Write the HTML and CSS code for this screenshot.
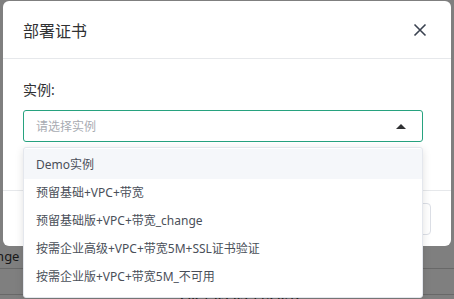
FILE: index.html
```html
<!DOCTYPE html>
<html lang="zh-CN">
<head>
  <meta charset="UTF-8">
  <title>部署证书</title>
  <link rel="stylesheet" href="styles.css">
</head>
<body>
  <div class="page">
    <div class="table-row first">
      <span class="cell">预留基础版+VPC+带宽_change</span>
    </div>
    <div class="table-row">
      <span class="cell date">2021-03-03 11:20:12</span>
    </div>
  </div>

  <div class="mask"></div>

  <div class="dialog">
    <div class="dialog-header">
      <span class="dialog-title">部署证书</span>
      <svg class="close-icon" width="14" height="14" viewBox="0 0 14 14">
        <path d="M1.5 1.5 L12.5 12.5 M12.5 1.5 L1.5 12.5" stroke="#3a4250" stroke-width="1.6" fill="none"/>
      </svg>
    </div>
    <div class="dialog-body">
      <div class="form-label">实例:</div>
      <div class="select">
        <span class="placeholder">请选择实例</span>
        <span class="caret"></span>
      </div>
    </div>
    <div class="dialog-footer">
      <button class="btn">取消</button>
    </div>
  </div>

  <ul class="dropdown">
    <li class="option hover">Demo实例</li>
    <li class="option">预留基础+VPC+带宽</li>
    <li class="option">预留基础版+VPC+带宽_change</li>
    <li class="option">按需企业高级+VPC+带宽5M+SSL证书验证</li>
    <li class="option">按需企业版+VPC+带宽5M_不可用</li>
  </ul>
</body>
</html>
```

FILE: styles.css
```css
body {
  margin: 0;
  width: 454px;
  height: 299px;
  overflow: hidden;
  position: relative;
  font-family: "Noto Sans", "Noto Sans CJK SC", sans-serif;
  background: #fff;
  color: #303133;
}
.page {
  padding-top: 243px;
}
.table-row {
  height: 25px;
  border-bottom: 1px solid #d0d0d0;
  display: flex;
  align-items: center;
  font-size: 13px;
  color: #333;
}
.table-row.first .cell {
  margin-left: -161px;
}
.table-row .date {
  margin-left: 180px;
  padding-top: 26px;
}
.mask {
  position: absolute;
  inset: 0;
  background: rgba(0, 0, 0, 0.5);
}
.dialog {
  position: absolute;
  left: 3px;
  top: 1px;
  width: 448px;
  height: 245px;
  background: #fff;
  border-radius: 6px;
  display: flex;
  flex-direction: column;
}
.dialog-header {
  height: 57px;
  display: flex;
  align-items: center;
  justify-content: space-between;
  padding: 0 24px 0 20px;
  border-bottom: 1px solid #e6e8eb;
}
.dialog-title {
  font-size: 16px;
  color: #303133;
}
.close-icon {
  display: block;
}
.dialog-body {
  padding: 21px 28px 0 20px;
  height: 110px;
  border-bottom: 1px solid #e6e8eb;
}
.form-label {
  font-size: 14px;
  line-height: 20px;
  color: #303133;
  margin-bottom: 10px;
}
.select {
  height: 30px;
  border: 1px solid #27a27f;
  border-radius: 3px;
  display: flex;
  align-items: center;
  justify-content: space-between;
  padding: 0 16px 0 12px;
}
.placeholder {
  font-size: 12px;
  color: #a8abb2;
}
.caret {
  width: 0;
  height: 0;
  border-left: 5px solid transparent;
  border-right: 5px solid transparent;
  border-bottom: 5px solid #303133;
}
.dialog-footer {
  display: flex;
  justify-content: flex-end;
  padding: 12px 20px 0 0;
}
.btn {
  height: 32px;
  padding: 0 20px;
  border: 1px solid #dcdfe6;
  border-radius: 4px;
  background: #fff;
  color: #606266;
  font-family: inherit;
  font-size: 13px;
}
.dropdown {
  position: absolute;
  left: 23px;
  top: 147px;
  width: 398px;
  margin: 0;
  padding: 1px 0 6px;
  list-style: none;
  background: #fff;
  border: 1px solid #e4e7ed;
  border-radius: 3px;
  box-shadow: 0 2px 8px rgba(0, 0, 0, 0.12);
}
.option {
  height: 28px;
  line-height: 28px;
  padding: 0 12px;
  font-size: 12px;
  color: #4a4f59;
  white-space: nowrap;
}
.option.hover {
  background: #f5f7fa;
  height: 30px;
  line-height: 32px;
}
```
